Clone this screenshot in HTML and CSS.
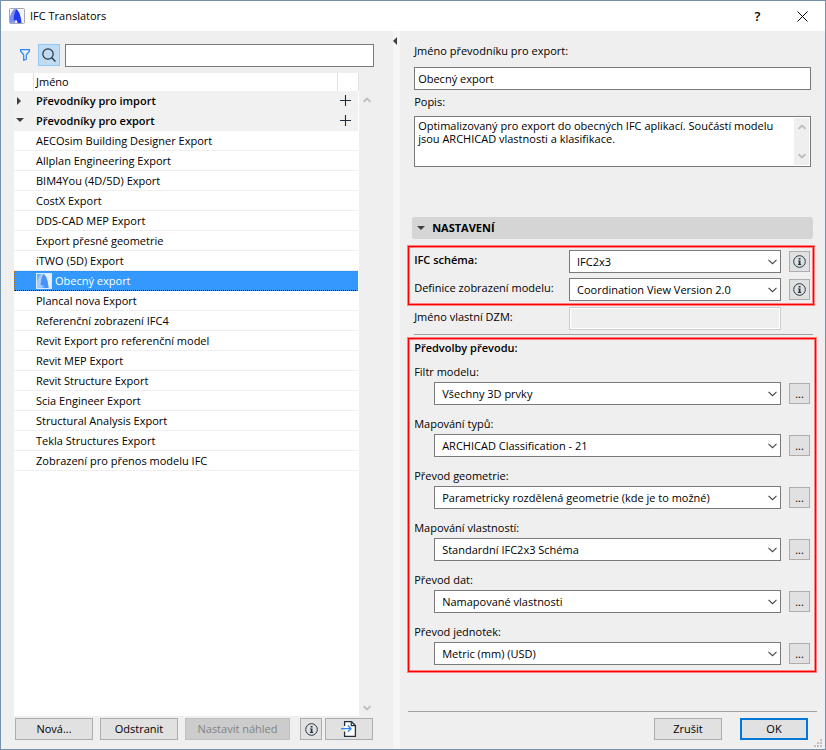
FILE: index.html
```html
<!DOCTYPE html>
<html lang="cs">
<head>
    <meta charset="UTF-8">
    <meta name="viewport" content="width=device-width, initial-scale=1.0">
    <title>IFC Translators</title>
    <link rel="stylesheet" href="styles.css">
</head>
<body>

    <!-- Shared icons -->
    <svg class="sprite" aria-hidden="true">
        <symbol id="chevron" viewBox="0 0 9 6"><path d="M.5 .8L4.500 4.700L8.500 .8" fill="none" stroke="currentColor" stroke-width="1.100"/></symbol>
        <symbol id="arrow" viewBox="0 0 8 6"><path d="M.5 4.800L4 1.500L7.500 4.800" fill="none" stroke="currentColor" stroke-width="2"/></symbol>
        <symbol id="plus" viewBox="0 0 11 11"><path d="M5.500 0V11M0 5.500H11" stroke="#1e2f3c" stroke-width="1.100"/></symbol>
        <symbol id="info" viewBox="0 0 13 13">
            <circle cx="6.500" cy="6.500" r="5.800" fill="none" stroke="#263640" stroke-width="1"/>
            <path d="M5.600 3h1.900v1.400H5.600zM5 5.400h2.500v3.700h.7v.8H4.900v-.8h.8V6.200H5z" fill="#263640"/>
        </symbol>
    </svg>

    <div class="dialog">
        <header class="titlebar">
            <svg class="logo" viewBox="0 0 16 16" aria-hidden="true">
                <rect x=".5" y=".5" width="15" height="15" rx="1" fill="#f4f5f9" stroke="#a4a7ad"/>
                <path d="M1 15V9C2 5 3.500 2 5.500 1H8L6 15H4.500L4 13.500L3.500 15z" fill="#7d90f2"/>
                <path d="M4.500 12C5 7 6 3 7.500 1.300C10 3 12 8 12.500 15H8.500L8 12.500z" fill="#2238ee"/>
            </svg>
            <h1>IFC Translators</h1>
            <button class="title-btn" aria-label="Help">?</button>
            <button class="title-btn" aria-label="Close">
                <svg width="11" height="11" viewBox="0 0 11 11"><path d="M.5 .5L10.500 10.500M10.500 .5L.5 10.500" stroke="#000" stroke-width="1"/></svg>
            </button>
        </header>

        <main class="content">
            <section class="left">
                <div class="search">
                    <button class="filter-btn" aria-label="Filter">
                        <svg width="10" height="12" viewBox="0 0 10 12"><path d="M.6 .6H9.400V2.200L6.300 5.800V10.200L3.700 11.300V5.800L.6 2.200z" fill="none" stroke="#2d83f7" stroke-width="1.200"/></svg>
                    </button>
                    <button class="search-btn" aria-label="Search">
                        <svg width="14" height="14" viewBox="0 0 14 14"><circle cx="6" cy="6" r="5.200" fill="none" stroke="#22333f" stroke-width="1.200"/><path d="M9.700 9.700L13.500 13.500" stroke="#22333f" stroke-width="1.300"/></svg>
                    </button>
                    <input type="text" class="field" aria-label="Search">
                </div>

                <div class="list-area">
                    <div class="list">
                        <div class="list-head"><span class="name">Jméno</span></div>
                        <ul>
                            <li class="group"><svg class="tri" viewBox="0 0 8 8"><path d="M1 0L5 4L1 8z"/></svg>Převodníky pro import
                                <button class="add" aria-label="Add"><svg><use href="#plus"/></svg></button></li>
                            <li class="group"><svg class="tri" viewBox="0 0 8 8"><path d="M0 1H8L4 5z"/></svg>Převodníky pro export
                                <button class="add" aria-label="Add"><svg><use href="#plus"/></svg></button></li>
                            <li>AECOsim Building Designer Export</li>
                            <li>Allplan Engineering Export</li>
                            <li>BIM4You (4D/5D) Export</li>
                            <li>CostX Export</li>
                            <li>DDS-CAD MEP Export</li>
                            <li>Export přesné geometrie</li>
                            <li>iTWO (5D) Export</li>
                            <li class="selected">
                                <svg class="logo" viewBox="0 0 16 16" aria-hidden="true">
                                    <rect x=".5" y=".5" width="15" height="15" fill="#68aefb" stroke="#d9eafd"/>
                                    <path d="M1 15V9C2 5 3.500 2 5.500 1H8L6 15H4.500L4 13.500L3.500 15z" fill="#a5cefc"/>
                                    <path d="M8 1H15V15H12.500C12 8 10.500 3 8 1z" fill="#e3f0fe"/>
                                    <path d="M4.500 12C5 7 6 3 7.500 1.300C10 3 12 8 12.500 15H8.500L8 12.500z" fill="#4a92f7"/>
                                </svg>Obecný export</li>
                            <li>Plancal nova Export</li>
                            <li>Referenční zobrazení IFC4</li>
                            <li>Revit Export pro referenční model</li>
                            <li>Revit MEP Export</li>
                            <li>Revit Structure Export</li>
                            <li>Scia Engineer Export</li>
                            <li>Structural Analysis Export</li>
                            <li>Tekla Structures Export</li>
                            <li>Zobrazení pro přenos modelu IFC</li>
                        </ul>
                    </div>
                    <div class="scroll">
                        <svg><use href="#arrow"/></svg>
                        <svg class="down"><use href="#arrow"/></svg>
                    </div>
                </div>

                <div class="list-buttons">
                    <button class="btn">Nová...</button>
                    <button class="btn">Odstranit</button>
                    <button class="btn preview" disabled>Nastavit náhled</button>
                    <button class="btn square" aria-label="Info"><svg class="info"><use href="#info"/></svg></button>
                    <button class="btn import" aria-label="Import">
                        <svg width="16" height="16" viewBox="0 0 16 16">
                            <path d="M3.600 5V.7H10.500L14.400 4.500V15.300H3.600V10.500" fill="#fff" stroke="#22333f" stroke-width="1.300"/>
                            <path d="M10.300 .7V4.700H14.400" fill="none" stroke="#22333f" stroke-width="1.200"/>
                            <path d="M0 7.700H10M6.800 4.500L10 7.700L6.800 10.900" fill="none" stroke="#2d83f7" stroke-width="1.300"/>
                        </svg>
                    </button>
                </div>
            </section>

            <div class="splitter"><svg width="4" height="8" viewBox="0 0 4 8"><path d="M4 0V8L0 4z" fill="#404040"/></svg></div>

            <section class="right">
                <div class="basic">
                    <label for="nazev">Jméno převodníku pro export:</label>
                    <input type="text" class="field" id="nazev" value="Obecný export">
                    <label for="popis">Popis:</label>
                    <div class="description">
                        <textarea id="popis">Optimalizovaný pro export do obecných IFC aplikací. Součástí modelu jsou ARCHICAD vlastnosti a klasifikace.</textarea>
                        <div class="scroll">
                            <svg><use href="#arrow"/></svg>
                            <svg class="down"><use href="#arrow"/></svg>
                        </div>
                    </div>
                </div>

                <h2><svg class="tri" viewBox="0 0 8 8"><path d="M0 2H8L4 6z"/></svg>NASTAVENÍ</h2>

                <div class="marked schema">
                    <div class="row">
                        <label for="schema"><b>IFC schéma:</b></label>
                        <div class="select"><select id="schema"><option>IFC2x3</option></select><svg><use href="#chevron"/></svg></div>
                        <button class="btn small" aria-label="Info"><svg class="info"><use href="#info"/></svg></button>
                    </div>
                    <div class="row">
                        <label for="mvd">Definice zobrazení modelu:</label>
                        <div class="select"><select id="mvd"><option>Coordination View Version 2.0</option></select><svg><use href="#chevron"/></svg></div>
                        <button class="btn small" aria-label="Info"><svg class="info"><use href="#info"/></svg></button>
                    </div>
                </div>

                <div class="row custom">
                    <label for="dzm">Jméno vlastní DZM:</label>
                    <input type="text" class="field" id="dzm" disabled>
                </div>
                <hr>

                <div class="marked presets">
                    <h3>Předvolby převodu:</h3>
                    <div class="preset">
                        <label for="filtr">Filtr modelu:</label>
                        <div class="row">
                            <div class="select"><select id="filtr"><option>Všechny 3D prvky</option></select><svg><use href="#chevron"/></svg></div>
                            <button class="btn small">...</button>
                        </div>
                    </div>
                    <div class="preset">
                        <label for="typy">Mapování typů:</label>
                        <div class="row">
                            <div class="select"><select id="typy"><option>ARCHICAD Classification - 21</option></select><svg><use href="#chevron"/></svg></div>
                            <button class="btn small">...</button>
                        </div>
                    </div>
                    <div class="preset">
                        <label for="geometrie">Převod geometrie:</label>
                        <div class="row">
                            <div class="select"><select id="geometrie"><option>Parametricky rozdělená geometrie (kde je to možné)</option></select><svg><use href="#chevron"/></svg></div>
                            <button class="btn small">...</button>
                        </div>
                    </div>
                    <div class="preset">
                        <label for="vlastnosti">Mapování vlastností:</label>
                        <div class="row">
                            <div class="select"><select id="vlastnosti"><option>Standardní IFC2x3 Schéma</option></select><svg><use href="#chevron"/></svg></div>
                            <button class="btn small">...</button>
                        </div>
                    </div>
                    <div class="preset">
                        <label for="data">Převod dat:</label>
                        <div class="row">
                            <div class="select"><select id="data"><option>Namapované vlastnosti</option></select><svg><use href="#chevron"/></svg></div>
                            <button class="btn small">...</button>
                        </div>
                    </div>
                    <div class="preset">
                        <label for="jednotky">Převod jednotek:</label>
                        <div class="row">
                            <div class="select"><select id="jednotky"><option>Metric (mm) (USD)</option></select><svg><use href="#chevron"/></svg></div>
                            <button class="btn small">...</button>
                        </div>
                    </div>
                </div>

                <footer>
                    <button class="btn">Zrušit</button>
                    <button class="btn primary">OK</button>
                </footer>
            </section>
        </main>

        <svg class="grip" viewBox="0 0 8 8" aria-hidden="true"><path d="M6 0h2v2H6zM3 3h2v2H3zM6 3h2v2H6zM0 6h2v2H0zM3 6h2v2H3zM6 6h2v2H6z" fill="#bfbfbf"/></svg>
    </div>

</body>
</html>
```
FILE: styles.css
```css
:root {
    --bg: #efefef;
    --frame: #7590ab;
    --border: #7a7a7a;
    --btn: #e1e1e1;
    --btn-border: #adadad;
    --blue: #0078d7;
}
* {
    box-sizing: border-box;
}
body {
    margin: 0;
    font-family: "Open Sans", "Noto Sans", sans-serif;
    font-size: 11px;
    line-height: 20px;
    color: #000;
}
button, input, select, textarea {
    font: inherit;
    color: inherit;
    margin: 0;
}
h1, h2, h3, ul {
    margin: 0;
    padding: 0;
    font-size: 11px;
}
h3, b {
    font-weight: 600;
}
svg {
    flex: none;
}
.sprite {
    position: absolute;
    width: 0;
    height: 0;
}
.dialog {
    position: relative;
    display: flex;
    flex-direction: column;
    min-height: 100vh;
    background: var(--bg);
    border: 1px solid var(--frame);
}

/* Title bar */
.titlebar {
    display: flex;
    align-items: center;
    height: 30px;
    padding-left: 8px;
    background: #fff;
}
.titlebar h1 {
    flex: 1;
    margin-left: 5px;
    font-weight: normal;
}
.logo {
    width: 16px;
    height: 16px;
}
.title-btn {
    display: flex;
    align-items: center;
    justify-content: center;
    width: 45px;
    height: 30px;
    padding: 0;
    border: none;
    background: none;
    font-size: 13px;
    font-weight: 600;
}

.content {
    flex: 1;
    display: grid;
    grid-template-columns: 12fr 7px 13fr;
}

/* Left side */
.left {
    display: flex;
    flex-direction: column;
    padding: 12px 19px 9px 13px;
}
.search {
    display: flex;
    align-items: center;
    height: 24px;
    margin-bottom: 6px;
}
.filter-btn, .search-btn {
    display: flex;
    align-items: center;
    justify-content: center;
    width: 22px;
    height: 22px;
    padding: 0;
    border: none;
    background: none;
}
.search-btn {
    margin: 0 5px 0 2px;
    border: 1px solid #90c8f6;
    background: #bfdcf2;
}
.field {
    width: 100%;
    height: 23px;
    padding: 0 3px;
    border: 1px solid var(--border);
    background: #fff;
}
.search .field {
    flex: 1;
    min-width: 0;
}
.list-area {
    flex: 1;
    display: flex;
}
.list {
    flex: 1;
    background: #fff;
}
.list-head {
    display: flex;
    height: 18px;
    line-height: 18px;
    padding-left: 19px;
    border-right: 1px solid #e2e2e2;
}
.list-head .name {
    flex: 1;
    margin-right: 20px;
    padding-left: 2px;
    border-left: 1px solid #e2e2e2;
    border-right: 1px solid #e2e2e2;
}
.list ul {
    list-style: none;
}
.list li {
    display: flex;
    align-items: center;
    height: 20px;
    margin-right: 1px;
    padding-left: 22px;
    border-bottom: 1px solid #efefef;
}
.list .group {
    padding-left: 0;
    background: #f1f1f1;
    font-weight: 600;
}
.tri {
    width: 8px;
    height: 8px;
    fill: #404040;
}
.group .tri {
    margin: 0 12px 0 2px;
}
.add {
    display: flex;
    margin-left: auto;
    padding: 4px 7px;
    border: none;
    background: none;
}
.add svg {
    width: 11px;
    height: 11px;
}
.list .selected {
    gap: 3px;
    padding-left: 21px;
    background: #3399ff;
    border: 1px dotted #cc6600;
    border-bottom-color: #000;
    color: #fff;
}
.scroll {
    display: flex;
    flex-direction: column;
    justify-content: space-between;
    align-items: center;
    width: 15px;
    padding: 24px 0 5px;
    color: #bfbfbf;
}
.scroll svg {
    width: 8px;
    height: 6px;
}
.scroll .down {
    transform: rotate(180deg);
}

/* Buttons */
.btn {
    display: flex;
    align-items: center;
    justify-content: center;
    width: 78px;
    height: 22px;
    padding: 0;
    background: var(--btn);
    border: 1px solid var(--btn-border);
}
.btn:hover {
    border-color: var(--blue);
}
.btn:disabled {
    background: #cccccc;
    border-color: #bfbfbf;
    color: #838383;
}
.info {
    width: 13px;
    height: 13px;
}
.list-buttons {
    display: flex;
    gap: 7px;
    margin-top: 2px;
    padding: 0 1px;
}
.btn.preview {
    width: 105px;
}
.btn.square {
    width: 22px;
    margin: 0 -4px 0 auto;
}
.btn.import {
    width: 48px;
}
.btn.small {
    flex: none;
    width: 21px;
    height: 21px;
}

.splitter {
    padding-top: 6px;
    background: #f6f6f6;
    line-height: 0;
}

/* Right side */
.right {
    display: flex;
    flex-direction: column;
    padding: 10px 8px 9px 8px;
}
.right label, .right h3 {
    display: block;
}
.basic {
    display: flex;
    flex-direction: column;
    margin: 0 6px 50px;
}
.basic label {
    margin-bottom: 4px;
}
.basic .field {
    margin: 2px 0;
}
.description {
    display: flex;
    height: 51px;
    border: 1px solid var(--border);
    background: #fff;
}
.description textarea {
    flex: 1;
    padding: 2px 3px 0;
    border: none;
    background: none;
    line-height: 13px;
    resize: none;
    overflow: hidden;
}
.description .scroll {
    margin: 1px;
    padding: 6px 0;
    background: var(--bg);
}
h2 {
    display: flex;
    align-items: center;
    gap: 7px;
    height: 22px;
    margin: 0 4px 6px;
    padding-left: 5px;
    border-radius: 3px;
    background: #d5d5d5;
}
.marked {
    border: 1px solid #ff8080;
    box-shadow: inset 0 0 0 1px #ff0000, inset 0 0 0 2px #ff8080;
}
.schema {
    display: flex;
    flex-direction: column;
    gap: 5px;
    margin: 0 2px 1px -1px;
    padding: 4px 4px 4px 6px;
}
.row {
    display: flex;
    align-items: center;
    gap: 8px;
    height: 23px;
}
.schema label, .custom label {
    flex: 1;
    align-self: flex-start;
}
.schema .select, .custom .field {
    flex: none;
    width: 212px;
}
.custom {
    margin: 0 36px 4px 6px;
}
.custom .field {
    background: var(--bg);
    border-color: #cccccc;
    box-shadow: inset 0 0 0 1px #fff;
}
hr {
    width: auto;
    margin: 0 4px 2px 6px;
    border: none;
    border-top: 1px solid #a0a0a0;
}
.select {
    position: relative;
    flex: 1;
    min-width: 0;
    height: 23px;
}
.select select {
    width: 100%;
    height: 23px;
    padding: 0 24px 0 7px;
    border: 1px solid var(--border);
    border-radius: 0;
    background: #fff;
    appearance: none;
}
.select svg {
    position: absolute;
    top: 9px;
    right: 4px;
    width: 9px;
    height: 6px;
    color: #444;
    pointer-events: none;
}
.presets {
    margin-left: -1px;
    padding: 0 6px 7px;
}
.presets h3 {
    margin-bottom: 4px;
}
.preset + .preset {
    margin-top: 9px;
}
.preset .row {
    padding-left: 20px;
}
footer {
    display: flex;
    justify-content: flex-end;
    gap: 18px;
    margin-top: auto;
    padding: 6px 9px 0 0;
    border-top: 1px solid #a0a0a0;
}
footer .btn {
    width: 68px;
}
.btn.primary {
    border: 2px solid var(--blue);
}
.grip {
    position: absolute;
    right: 3px;
    bottom: 2px;
    width: 8px;
    height: 8px;
}
```
